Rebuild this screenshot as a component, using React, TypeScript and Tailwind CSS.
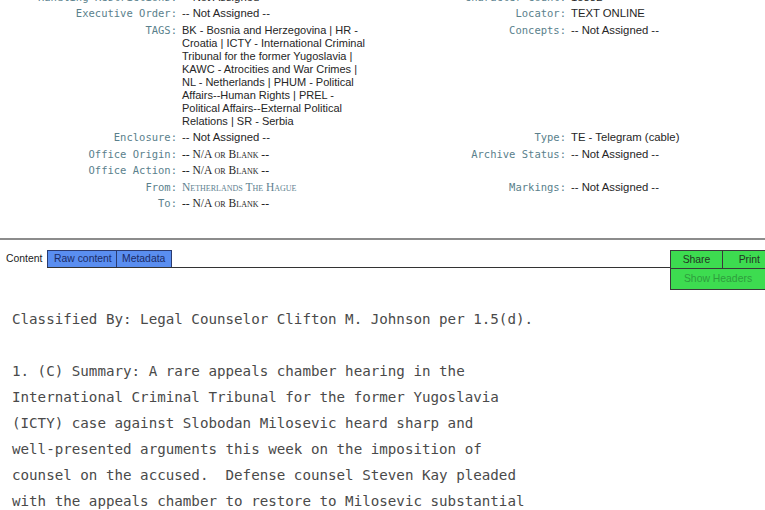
import React from 'react';

const mono = { fontFamily: '"DejaVu Sans Mono", "Liberation Mono", monospace' };
const sans = { fontFamily: '"Liberation Sans", Arial, sans-serif' };
const serif = { fontFamily: '"Liberation Serif", "Times New Roman", serif' };

function Label({ children }: { children?: React.ReactNode }) {
  return (
    <div style={mono} className="text-right text-[10.5px] leading-[13px] py-[1.75px] text-[#5a7f8c] whitespace-nowrap">
      {children}
    </div>
  );
}

function Value({ children, className = '' }: { children?: React.ReactNode; className?: string }) {
  return (
    <div style={sans} className={`text-[11.3px] leading-[13px] py-[1.75px] text-[#262626] whitespace-nowrap ${className}`}>
      {children}
    </div>
  );
}

function Blank() {
  return (
    <span style={serif} className="text-[11.5px] [font-variant-caps:small-caps]">
      -- N/A or Blank --
    </span>
  );
}

const NA = '-- Not Assigned --';

const TAG_LINES = [
  'BK - Bosnia and Herzegovina | HR -',
  'Croatia | ICTY - International Criminal',
  'Tribunal for the former Yugoslavia |',
  'KAWC - Atrocities and War Crimes |',
  'NL - Netherlands | PHUM - Political',
  'Affairs--Human Rights | PREL -',
  'Political Affairs--External Political',
  'Relations | SR - Serbia',
];

const BODY = [
  'Classified By: Legal Counselor Clifton M. Johnson per 1.5(d).',
  '',
  '1. (C) Summary: A rare appeals chamber hearing in the',
  'International Criminal Tribunal for the former Yugoslavia',
  '(ICTY) case against Slobodan Milosevic heard sharp and',
  'well-presented arguments this week on the imposition of',
  'counsel on the accused.  Defense counsel Steven Kay pleaded',
  'with the appeals chamber to restore to Milosevic substantial',
];

export default function App() {
  return (
    <div className="w-[765px] h-[510px] overflow-hidden bg-white">
      {/* metadata table */}
      <div className="mt-[-11px] grid grid-cols-[177px_190px_189px_1fr] gap-x-[5px]">
        <Label>Handling Restrictions:</Label>
        <Value>{NA}</Value>
        <Label>Character Count:</Label>
        <Value>15882</Value>

        <Label>Executive Order:</Label>
        <Value>{NA}</Value>
        <Label>Locator:</Label>
        <Value>TEXT ONLINE</Value>

        <Label>TAGS:</Label>
        <Value className="text-[11px] text-[#4a7792]">
          {TAG_LINES.map(l => (
            <div key={l}>{l}</div>
          ))}
        </Value>
        <Label>Concepts:</Label>
        <Value>{NA}</Value>

        <Label>Enclosure:</Label>
        <Value>{NA}</Value>
        <Label>Type:</Label>
        <Value>TE - Telegram (cable)</Value>

        <Label>Office Origin:</Label>
        <Value><Blank /></Value>
        <Label>Archive Status:</Label>
        <Value>{NA}</Value>

        <Label>Office Action:</Label>
        <Value><Blank /></Value>
        <div />
        <div />

        <Label>From:</Label>
        <Value>
          <span style={serif} className="text-[11.5px] text-[#5e7f90] [font-variant-caps:small-caps]">
            Netherlands The Hague
          </span>
        </Value>
        <Label>Markings:</Label>
        <Value>{NA}</Value>

        <Label>To:</Label>
        <Value><Blank /></Value>
        <div />
        <div />
      </div>

      <div className="mt-[26px] h-[2px] bg-[#8c8c8c]" />

      {/* tab bar */}
      <div style={sans} className="mt-[10px] flex items-start text-[10.4px]">
        <div className="w-[47px] h-[18px] flex items-center pl-[6px] text-[#222]">Content</div>
        <div className="flex-1 flex h-[18px] border-b border-[#333]">
          <div className="w-[70px] bg-[#5a8ef0] border border-b-0 border-[#2b3b70] flex items-center pl-[6px] text-[#1b2b66]">
            Raw content
          </div>
          <div className="w-[55px] bg-[#5a8ef0] border border-l-0 border-b-0 border-[#2b3b70] flex items-center pl-[5px] text-[#1b2b66]">
            Metadata
          </div>
        </div>
        <div className="w-[95px] bg-[#3ddc50] border border-[#3a3a3a] border-r-0">
          <div className="flex h-[18px] border-b border-[#3a3a3a]">
            <div className="w-[52px] border-r border-[#3a3a3a] flex items-center justify-center text-[#233523]">Share</div>
            <div className="flex-1 flex items-center justify-end pr-[5px] text-[#233523]">Print</div>
          </div>
          <div className="h-[20px] flex items-center justify-center text-[#2f9c3e]">Show Headers</div>
        </div>
      </div>

      {/* body */}
      <div style={mono} className="mt-[16px] px-[12px] text-[14.2px] leading-[26px] text-[#4a4a4a] whitespace-pre">
        {BODY.map((l, i) => (
          <div key={i} className="h-[26px]">{l}</div>
        ))}
      </div>
    </div>
  );
}
